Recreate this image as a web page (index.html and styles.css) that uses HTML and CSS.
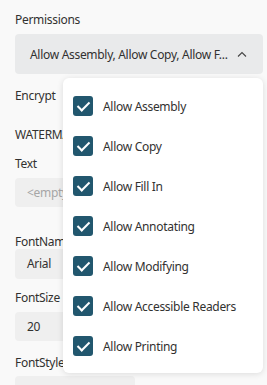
FILE: index.html
```html
<!DOCTYPE html>
<html lang="en">
<head>
    <meta charset="UTF-8" />
    <title>Document settings</title>
    <link rel="stylesheet" href="styles.css">
</head>
<body>
    <div class="panel">
        <div class="field">
            <label>Permissions</label>
            <div class="select open">
                <span class="select-value">Allow Assembly, Allow Copy, Allow F...</span>
                <svg class="chevron" width="10" height="6" viewBox="0 0 10 6"><path d="M1 5.5 L5 1.5 L9 5.5" fill="none" stroke="#444" stroke-width="1.1"/></svg>
            </div>
        </div>

        <div class="field toggle-row">
            <label>Encrypt</label>
        </div>

        <h4 class="section">WATERMARK</h4>

        <div class="field field-text">
            <label>Text</label>
            <div class="input placeholder">&lt;empty&gt;</div>
        </div>
        <div class="field field-fontname">
            <label>FontName</label>
            <div class="input">Arial</div>
        </div>
        <div class="field field-fontsize">
            <label>FontSize</label>
            <div class="input">20</div>
        </div>
        <div class="field field-fontstyle">
            <label>FontStyle</label>
            <div class="input"></div>
        </div>

        <!-- dropdown lijst van de permissions select -->
        <ul class="dropdown">
            <li><span class="check"></span>Allow Assembly</li>
            <li><span class="check"></span>Allow Copy</li>
            <li><span class="check"></span>Allow Fill In</li>
            <li><span class="check"></span>Allow Annotating</li>
            <li><span class="check"></span>Allow Modifying</li>
            <li><span class="check"></span>Allow Accessible Readers</li>
            <li><span class="check"></span>Allow Printing</li>
        </ul>
    </div>
</body>
</html>
```

FILE: styles.css
```css
* {
    box-sizing: border-box;
}

html, body {
    height: 100%;
}

body {
    margin: 0;
    background: #f9f9f9;
    font-family: 'Segoe UI', 'Noto Sans', sans-serif;
    font-size: 12px;
    letter-spacing: -0.3px;
    color: #323130;
    overflow: hidden;
}

.panel {
    position: relative;
    height: 100%;
    overflow: hidden;
    padding: 12px 4px 0 15px;
}

.field {
    display: flex;
    flex-direction: column;
}

    .field label {
        line-height: 16px;
        margin-bottom: 6px;
    }

.select {
    display: flex;
    align-items: center;
    justify-content: space-between;
    height: 40px;
    padding: 0 16px 0 15px;
    background: #e9eaeb;
    border-radius: 4px;
}

.select-value {
    white-space: nowrap;
}

.toggle-row {
    margin-top: 14px;
}

.section {
    margin: 17px 0 13px;
    font-weight: normal;
    font-size: 12px;
    line-height: 16px;
}

.input {
    height: 29px;
    line-height: 29px;
    padding: 0 12px;
    background: #efefef;
    border-radius: 4px;
    width: 120px;
}

    .input.placeholder {
        color: #a6a6a6;
    }

.field-fontname {
    margin-top: 28px;
}

    .field-fontname label {
        line-height: 14px;
        margin-bottom: 0;
    }

    .field-fontname .input {
        height: 30px;
        line-height: 30px;
    }

.field-fontsize {
    margin-top: 11px;
}

.field-fontstyle {
    margin-top: 14px;
}

    .field-fontstyle label {
        margin-bottom: 5px;
    }

.dropdown {
    position: absolute;
    top: 78px;
    left: 63px;
    width: 200px;
    height: 295px;
    margin: 0;
    padding: 8px 0 0 10px;
    list-style: none;
    background: #fff;
    border-radius: 6px;
    box-shadow: 0 1px 6px rgba(0, 0, 0, 0.12);
}

    .dropdown li {
        display: flex;
        align-items: center;
        height: 40px;
    }

.check {
    position: relative;
    width: 20px;
    height: 20px;
    margin-right: 10px;
    border-radius: 3px;
    background: #22576e;
}

    .check::after {
        content: '';
        position: absolute;
        left: 7px;
        top: 3px;
        width: 5px;
        height: 10px;
        border: solid #fff;
        border-width: 0 2px 2px 0;
        transform: rotate(45deg);
    }
```
